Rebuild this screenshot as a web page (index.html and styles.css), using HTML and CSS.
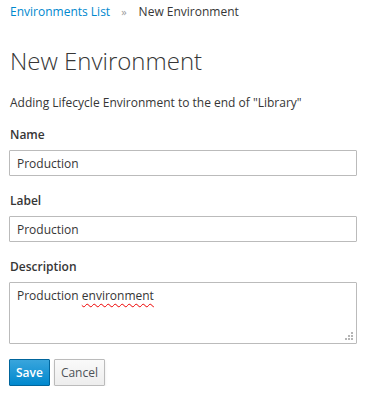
FILE: index.html
```html
<!DOCTYPE html>
<html>
<head>
<meta charset="utf-8">
<link rel="stylesheet" href="styles.css">
</head>
<body>
<div class="page">
  <nav class="breadcrumb">
    <a class="crumb-link" href="#">Environments List</a>
    <span class="crumb-sep">»</span>
    <span class="crumb-active">New Environment</span>
  </nav>
  <h1 class="title">New Environment</h1>
  <p class="intro">Adding Lifecycle Environment to the end of "Library"</p>
  <form class="form">
    <div class="form-group">
      <label class="control-label">Name</label>
      <input class="form-control" type="text" value="Production">
    </div>
    <div class="form-group">
      <label class="control-label">Label</label>
      <input class="form-control" type="text" value="Production">
    </div>
    <div class="form-group">
      <label class="control-label">Description</label>
      <div class="form-control textarea" role="textbox">Production <span class="misspelled">environment</span>
        <svg class="grip" width="9" height="9" viewBox="0 0 9 9"><g fill="#b5b5b5"><rect x="6" y="0" width="2" height="2"/><rect x="3" y="3" width="2" height="2"/><rect x="6" y="3" width="2" height="2"/><rect x="0" y="6" width="2" height="2"/><rect x="3" y="6" width="2" height="2"/><rect x="6" y="6" width="2" height="2"/></g></svg>
      </div>
    </div>
    <div class="actions">
      <button type="button" class="btn btn-primary">Save</button>
      <button type="button" class="btn btn-default">Cancel</button>
    </div>
  </form>
</div>
</body>
</html>
```
FILE: styles.css
```css
* { box-sizing: border-box; }
html, body { margin: 0; padding: 0; background: #fff; }
body {
  font-family: "Open Sans", "Liberation Sans", sans-serif;
  font-size: 12px;
  line-height: 20px;
  color: #363636;
}
.page { padding: 2px 8px 0 9px; }
.breadcrumb {
  display: flex;
  align-items: center;
  height: 20px;
  padding-left: 1px;
}
.crumb-link { color: #0088ce; text-decoration: none; }
.crumb-sep { color: #9c9c9c; margin: 0 12px 0 11px; font-size: 11px; }
.crumb-active { color: #363636; }
.title {
  margin: 26px 0 0 0;
  padding-left: 1px;
  font-size: 24px;
  font-weight: 300;
  line-height: 26px;
  color: #363636;
}
.intro { margin: 19px 0 12px 0; padding-left: 1px; }
.form { display: flex; flex-direction: column; }
.form-group { display: flex; flex-direction: column; margin-bottom: 15px; }
.control-label { font-weight: 600; margin-bottom: 5px; padding-left: 1px; }
.form-control {
  width: 348px;
  height: 26px;
  border: 1px solid #bbb;
  padding: 2px 7px;
  font: inherit;
  color: #363636;
  background: #fff;
  border-radius: 1px;
}
.textarea {
  position: relative;
  height: 62px;
  padding: 3px 7px;
}
.misspelled {
  text-decoration: underline wavy #e00;
  text-decoration-thickness: 1px;
  text-underline-offset: 3px;
}
.grip { position: absolute; right: 2px; bottom: 2px; }
.actions { display: flex; gap: 4px; }
.btn {
  height: 27px;
  padding: 2px 6px;
  font: inherit;
  font-weight: 600;
  border-radius: 1px;
  border: 1px solid;
}
.btn-primary {
  color: #fff;
  background: linear-gradient(#39a5dc, #0088ce);
  border-color: #00659c;
}
.btn-default {
  color: #4d5258;
  background: linear-gradient(#fafafa, #ededed);
  border-color: #bbb;
  font-weight: 400;
  box-shadow: 0 2px 3px rgba(3,3,3,0.1);
}
```
